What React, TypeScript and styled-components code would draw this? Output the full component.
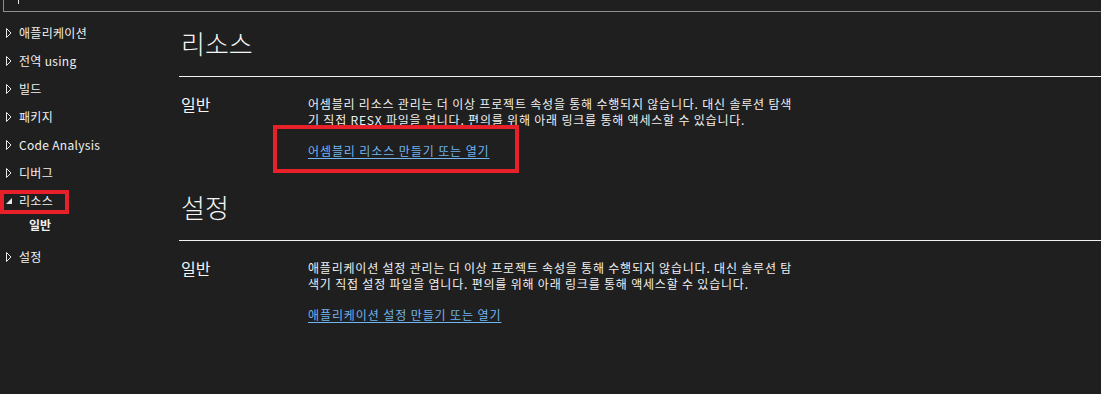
import React from "react";
import styled, { createGlobalStyle } from "styled-components";

const Global = createGlobalStyle`
  html, body {
    margin: 0;
    padding: 0;
    background: #1f1f1f;
  }
  body {
    font-family: "Noto Sans CJK KR", "Noto Sans", sans-serif;
    color: #f2f2f2;
    width: 1101px;
    height: 394px;
    overflow: hidden;
  }
`;

const SearchBar = styled.div`
  height: 11px;
  margin-left: 3px;
  border-left: 1px solid #8e8e8e;
  border-bottom: 1px solid #8e8e8e;
  display: flex;
  align-items: flex-start;
`;

const Caret = styled.span`
  display: block;
  width: 1px;
  height: 4px;
  margin-left: 14px;
  background: #e6e6e6;
`;

const Layout = styled.div`
  display: grid;
  grid-template-columns: 179px 1fr;
`;

const Sidebar = styled.nav`
  display: flex;
  flex-direction: column;
  padding-top: 7px;
`;

const Item = styled.div<{ $marked?: boolean }>`
  position: relative;
  height: 28px;
  display: flex;
  align-items: center;
  padding-left: 6px;
  font-size: 12px;
  letter-spacing: 0.3px;
  color: #f0f0f0;
  &::after {
    content: "";
    display: ${(p) => (p.$marked ? "block" : "none")};
    position: absolute;
    left: 0;
    top: 3px;
    width: 69px;
    height: 24px;
    box-sizing: border-box;
    border: 4px solid #e8202a;
  }
`;

const Arrow = styled.span`
  display: flex;
  width: 13px;
  align-items: center;
`;

const ItemLabel = styled.span`
  line-height: 16px;
`;

const SubItem = styled.div`
  height: 28px;
  display: flex;
  align-items: flex-start;
  padding-left: 29px;
  font-size: 12px;
  font-weight: 700;
  color: #f0f0f0;
  line-height: 20px;
`;

const Main = styled.main`
  display: flex;
  flex-direction: column;
`;

const Section = styled.section<{ $gap: number }>`
  margin-top: ${(p) => p.$gap}px;
`;

const Title = styled.h1`
  margin: 0;
  padding-left: 2px;
  font-size: 26px;
  font-weight: 300;
  line-height: 36px;
  color: #f5f5f5;
`;

const Rule = styled.hr`
  margin: 15px 0 0 0;
  border: none;
  border-top: 1px solid #f2f2f2;
  height: 0;
`;

const Row = styled.div`
  display: grid;
  grid-template-columns: 129px 1fr;
  padding-top: 16px;
`;

const RowHeading = styled.h2`
  margin: 0;
  padding-left: 2px;
  font-size: 16px;
  font-weight: 400;
  line-height: 22px;
  color: #f5f5f5;
`;

const Body = styled.div`
  display: flex;
  flex-direction: column;
  padding-top: 3px;
`;

const Desc = styled.p`
  margin: 0;
  font-size: 12px;
  line-height: 16px;
  letter-spacing: 0.8px;
  color: #f0f0f0;
`;

const Line = styled.span`
  display: block;
  white-space: nowrap;
`;

const LinkWrap = styled.div`
  margin-top: 14px;
  display: flex;
`;

const Link = styled.a<{ $marked?: boolean }>`
  position: relative;
  font-size: 12px;
  line-height: 17px;
  letter-spacing: 0.9px;
  color: #72b4ee;
  text-decoration: underline;
  text-underline-offset: 2px;
  cursor: pointer;
  &::after {
    content: "";
    display: ${(p) => (p.$marked ? "block" : "none")};
    position: absolute;
    left: -35px;
    right: -29px;
    top: -17px;
    bottom: -14px;
    border: 4px solid #e8202a;
  }
`;

const Collapsed = () => (
  <svg width="6" height="10" viewBox="0 0 6 10">
    <polygon points="0.5,0.5 5,5 0.5,9.5" fill="none" stroke="#e8e8e8" strokeWidth="1" />
  </svg>
);

const Expanded = () => (
  <svg width="6" height="6" viewBox="0 0 6 6">
    <polygon points="6,0 6,6 0,6" fill="#e8e8e8" />
  </svg>
);

type Nav = { label: string; open?: boolean; marked?: boolean; children?: string[] };

const nav: Nav[] = [
  { label: "애플리케이션" },
  { label: "전역 using" },
  { label: "빌드" },
  { label: "패키지" },
  { label: "Code Analysis" },
  { label: "디버그" },
  { label: "리소스", open: true, marked: true, children: ["일반"] },
  { label: "설정" },
];

type Sec = { title: string; gap: number; lines: string[]; link: string; marked?: boolean };

const sections: Sec[] = [
  {
    title: "리소스",
    gap: 13,
    lines: [
      "어셈블리 리소스 관리는 더 이상 프로젝트 속성을 통해 수행되지 않습니다. 대신 솔루션 탐색",
      "기 직접 RESX 파일을 엽니다. 편의를 위해 아래 링크를 통해 액세스할 수 있습니다.",
    ],
    link: "어셈블리 리소스 만들기 또는 열기",
    marked: true,
  },
  {
    title: "설정",
    gap: 30,
    lines: [
      "애플리케이션 설정 관리는 더 이상 프로젝트 속성을 통해 수행되지 않습니다. 대신 솔루션 탐",
      "색기 직접 설정 파일을 엽니다. 편의를 위해 아래 링크를 통해 액세스할 수 있습니다.",
    ],
    link: "애플리케이션 설정 만들기 또는 열기",
  },
];

export default function App() {
  return (
    <>
      <Global />
      <SearchBar>
        <Caret />
      </SearchBar>
      <Layout>
        <Sidebar>
          {nav.map((n) => (
            <React.Fragment key={n.label}>
              <Item $marked={n.marked}>
                <Arrow>{n.open ? <Expanded /> : <Collapsed />}</Arrow>
                <ItemLabel>{n.label}</ItemLabel>
              </Item>
              {n.children?.map((c) => (
                <SubItem key={c}>{c}</SubItem>
              ))}
            </React.Fragment>
          ))}
        </Sidebar>
        <Main>
          {sections.map((s) => (
            <Section key={s.title} $gap={s.gap}>
              <Title>{s.title}</Title>
              <Rule />
              <Row>
                <RowHeading>일반</RowHeading>
                <Body>
                  <Desc>
                    {s.lines.map((l) => (
                      <Line key={l}>{l}</Line>
                    ))}
                  </Desc>
                  <LinkWrap>
                    <Link $marked={s.marked}>{s.link}</Link>
                  </LinkWrap>
                </Body>
              </Row>
            </Section>
          ))}
        </Main>
      </Layout>
    </>
  );
}
